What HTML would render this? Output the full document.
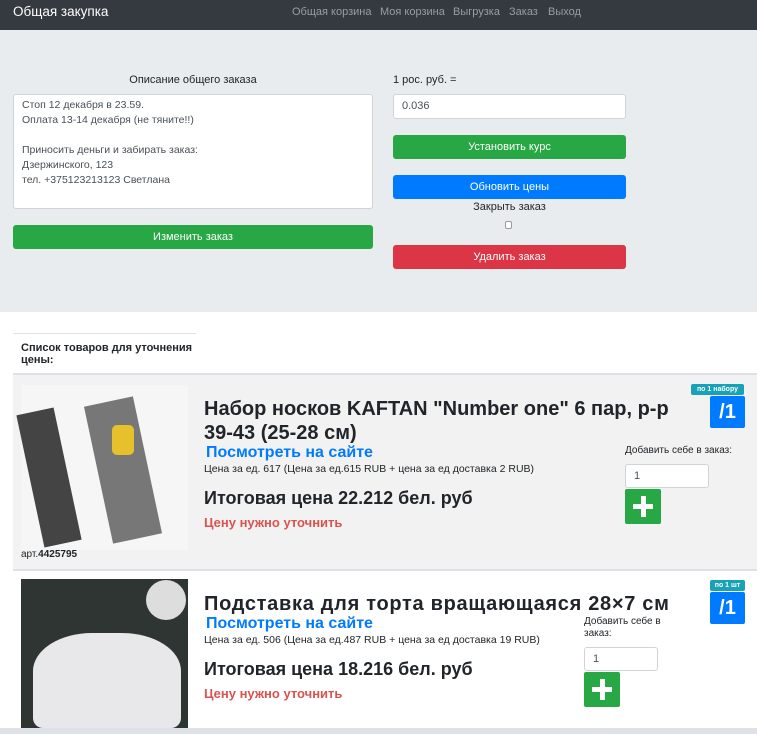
<!DOCTYPE html><html><head><meta charset="utf-8"><style>
*{box-sizing:border-box;margin:0;padding:0}
body{width:757px;height:734px;overflow:hidden;font-family:"Liberation Sans",sans-serif;background:#fff;color:#212529;position:relative}
.a{position:absolute}
.btn{position:absolute;color:#fff;font-size:11px;text-align:center;border-radius:3px}
.inp{position:absolute;background:#fff;border:1px solid #ced4da;border-radius:3px;font-size:11px;color:#495057}
.nl{position:absolute;top:6px;font-size:11px;color:#9a9da1;white-space:nowrap}
</style></head><body>
<div class="a" style="left:0;top:0;width:757px;height:30px;background:#343a40"></div>
<div class="a" style="left:13px;top:4px;font-size:13.5px;color:#fff">Общая закупка</div>
<div class="nl" style="left:292px">Общая корзина</div>
<div class="nl" style="left:380px">Моя корзина</div>
<div class="nl" style="left:453px">Выгрузка</div>
<div class="nl" style="left:509px">Заказ</div>
<div class="nl" style="left:548px">Выход</div>
<div class="a" style="left:0;top:30px;width:757px;height:282px;background:#e9ecef"></div>
<div class="a" style="left:13px;top:74px;width:360px;text-align:center;font-size:11px">Описание общего заказа</div>
<div class="inp" style="left:13px;top:94px;width:360px;height:115px;padding:3px 8px;line-height:15px;font-size:10.5px">Стоп 12 декабря в 23.59.<br>Оплата 13-14 декабря (не тяните!!)<br><br>Приносить деньги и забирать заказ:<br>Дзержинского, 123<br>тел. +375123213123 Светлана</div>
<div class="btn" style="left:13px;top:225px;width:360px;height:24px;line-height:24px;background:#28a745">Изменить заказ</div>
<div class="a" style="left:393px;top:74px;font-size:11px">1 рос. руб. =</div>
<div class="inp" style="left:393px;top:94px;width:233px;height:25px;line-height:23px;padding-left:8px">0.036</div>
<div class="btn" style="left:393px;top:135px;width:233px;height:24px;line-height:24px;background:#28a745">Установить курс</div>
<div class="btn" style="left:393px;top:175px;width:233px;height:24px;line-height:24px;background:#007bff">Обновить цены</div>
<div class="a" style="left:393px;top:201px;width:233px;text-align:center;font-size:11px">Закрыть заказ</div>
<div class="a" style="left:505px;top:221px;width:7px;height:8px;border:1px solid #999;border-radius:2px;background:#fff"></div>
<div class="btn" style="left:393px;top:245px;width:233px;height:24px;line-height:24px;background:#dc3545">Удалить заказ</div>
<div class="a" style="left:13px;top:333px;width:183px;border-top:1px solid #dee2e6"></div>
<div class="a" style="left:21px;top:342px;width:175px;font-size:11px;font-weight:bold;line-height:12px">Список товаров для уточнения цены:</div>
<div class="a" style="left:13px;top:373px;width:744px;height:198px;background:#f2f2f2;border-top:2px solid #dee2e6;border-bottom:2px solid #dee2e6"></div>
<div class="a" style="left:21px;top:385px;width:167px;height:165px;background:#f6f6f6"></div>
<div class="a" style="left:30px;top:410px;width:38px;height:135px;background:#444;transform:rotate(-12deg)"></div>
<div class="a" style="left:98px;top:400px;width:50px;height:140px;background:#777;transform:rotate(-12deg)"></div>
<div class="a" style="left:112px;top:425px;width:22px;height:30px;background:#e6c12b;border-radius:5px"></div>
<div class="a" style="left:21px;top:549px;font-size:10px">арт.<b>4425795</b></div>
<div class="a" style="left:204px;top:397px;width:470px;font-size:20px;font-weight:bold;line-height:24px">Набор носков KAFTAN "Number one" 6 пар, р-р 39-43 (25-28 см)</div>
<div class="a" style="left:206px;top:444px;font-size:16px;font-weight:bold;color:#007bff">Посмотреть на сайте</div>
<div class="a" style="left:204px;top:463px;font-size:10.5px;white-space:nowrap">Цена за ед. 617 (Цена за ед.615 RUB + цена за ед доставка 2 RUB)</div>
<div class="a" style="left:204px;top:488px;font-size:18px;font-weight:bold">Итоговая цена 22.212 бел. руб</div>
<div class="a" style="left:204px;top:515px;font-size:13px;font-weight:bold;color:#d9534f">Цену нужно уточнить</div>
<div class="a" style="left:691px;top:384px;width:53px;height:11px;background:#17a2b8;color:#fff;font-size:7px;font-weight:bold;text-align:center;line-height:11px;border-radius:2px">по 1 набору</div>
<div class="a" style="left:710px;top:396px;width:35px;height:32px;background:#007bff;color:#fff;font-size:20px;font-weight:bold;text-align:center;line-height:32px;border-radius:2px">/1</div>
<div class="a" style="left:625px;top:445px;font-size:10px">Добавить себе в заказ:</div>
<div class="inp" style="left:625px;top:464px;width:84px;height:24px;line-height:22px;padding-left:8px">1</div>
<div class="a" style="left:625px;top:489px;width:36px;height:35px;background:#28a745;border-radius:2px"><div class="a" style="left:8px;top:15px;width:20px;height:5px;background:#fff"></div><div class="a" style="left:15.5px;top:7px;width:5px;height:21px;background:#fff"></div></div>
<div class="a" style="left:21px;top:579px;width:167px;height:149px;background:#2e3532"></div>
<div class="a" style="left:33px;top:633px;width:148px;height:95px;background:#e8e8ea;border-radius:40% 40% 10px 10px"></div>
<div class="a" style="left:146px;top:580px;width:40px;height:40px;background:#ddd;border-radius:50%"></div>
<div class="a" style="left:204px;top:593px;font-size:20px;font-weight:bold;white-space:nowrap;letter-spacing:0.7px">Подставка для торта вращающаяся 28×7 см</div>
<div class="a" style="left:206px;top:615px;font-size:16px;font-weight:bold;color:#007bff">Посмотреть на сайте</div>
<div class="a" style="left:204px;top:634px;font-size:10.5px;white-space:nowrap">Цена за ед. 506 (Цена за ед.487 RUB + цена за ед доставка 19 RUB)</div>
<div class="a" style="left:204px;top:659px;font-size:18px;font-weight:bold">Итоговая цена 18.216 бел. руб</div>
<div class="a" style="left:204px;top:686px;font-size:13px;font-weight:bold;color:#d9534f">Цену нужно уточнить</div>
<div class="a" style="left:710px;top:580px;width:35px;height:11px;background:#17a2b8;color:#fff;font-size:7px;font-weight:bold;text-align:center;line-height:11px;border-radius:2px">по 1 шт</div>
<div class="a" style="left:710px;top:592px;width:35px;height:32px;background:#007bff;color:#fff;font-size:20px;font-weight:bold;text-align:center;line-height:32px;border-radius:2px">/1</div>
<div class="a" style="left:584px;top:616px;width:90px;font-size:10px;line-height:12px">Добавить себе в заказ:</div>
<div class="inp" style="left:584px;top:647px;width:74px;height:24px;line-height:22px;padding-left:8px">1</div>
<div class="a" style="left:584px;top:672px;width:36px;height:35px;background:#28a745;border-radius:2px"><div class="a" style="left:8px;top:15px;width:20px;height:5px;background:#fff"></div><div class="a" style="left:15.5px;top:7px;width:5px;height:21px;background:#fff"></div></div>
<div class="a" style="left:0;top:728px;width:757px;height:6px;background:#dee2e6"></div>
</body></html>
